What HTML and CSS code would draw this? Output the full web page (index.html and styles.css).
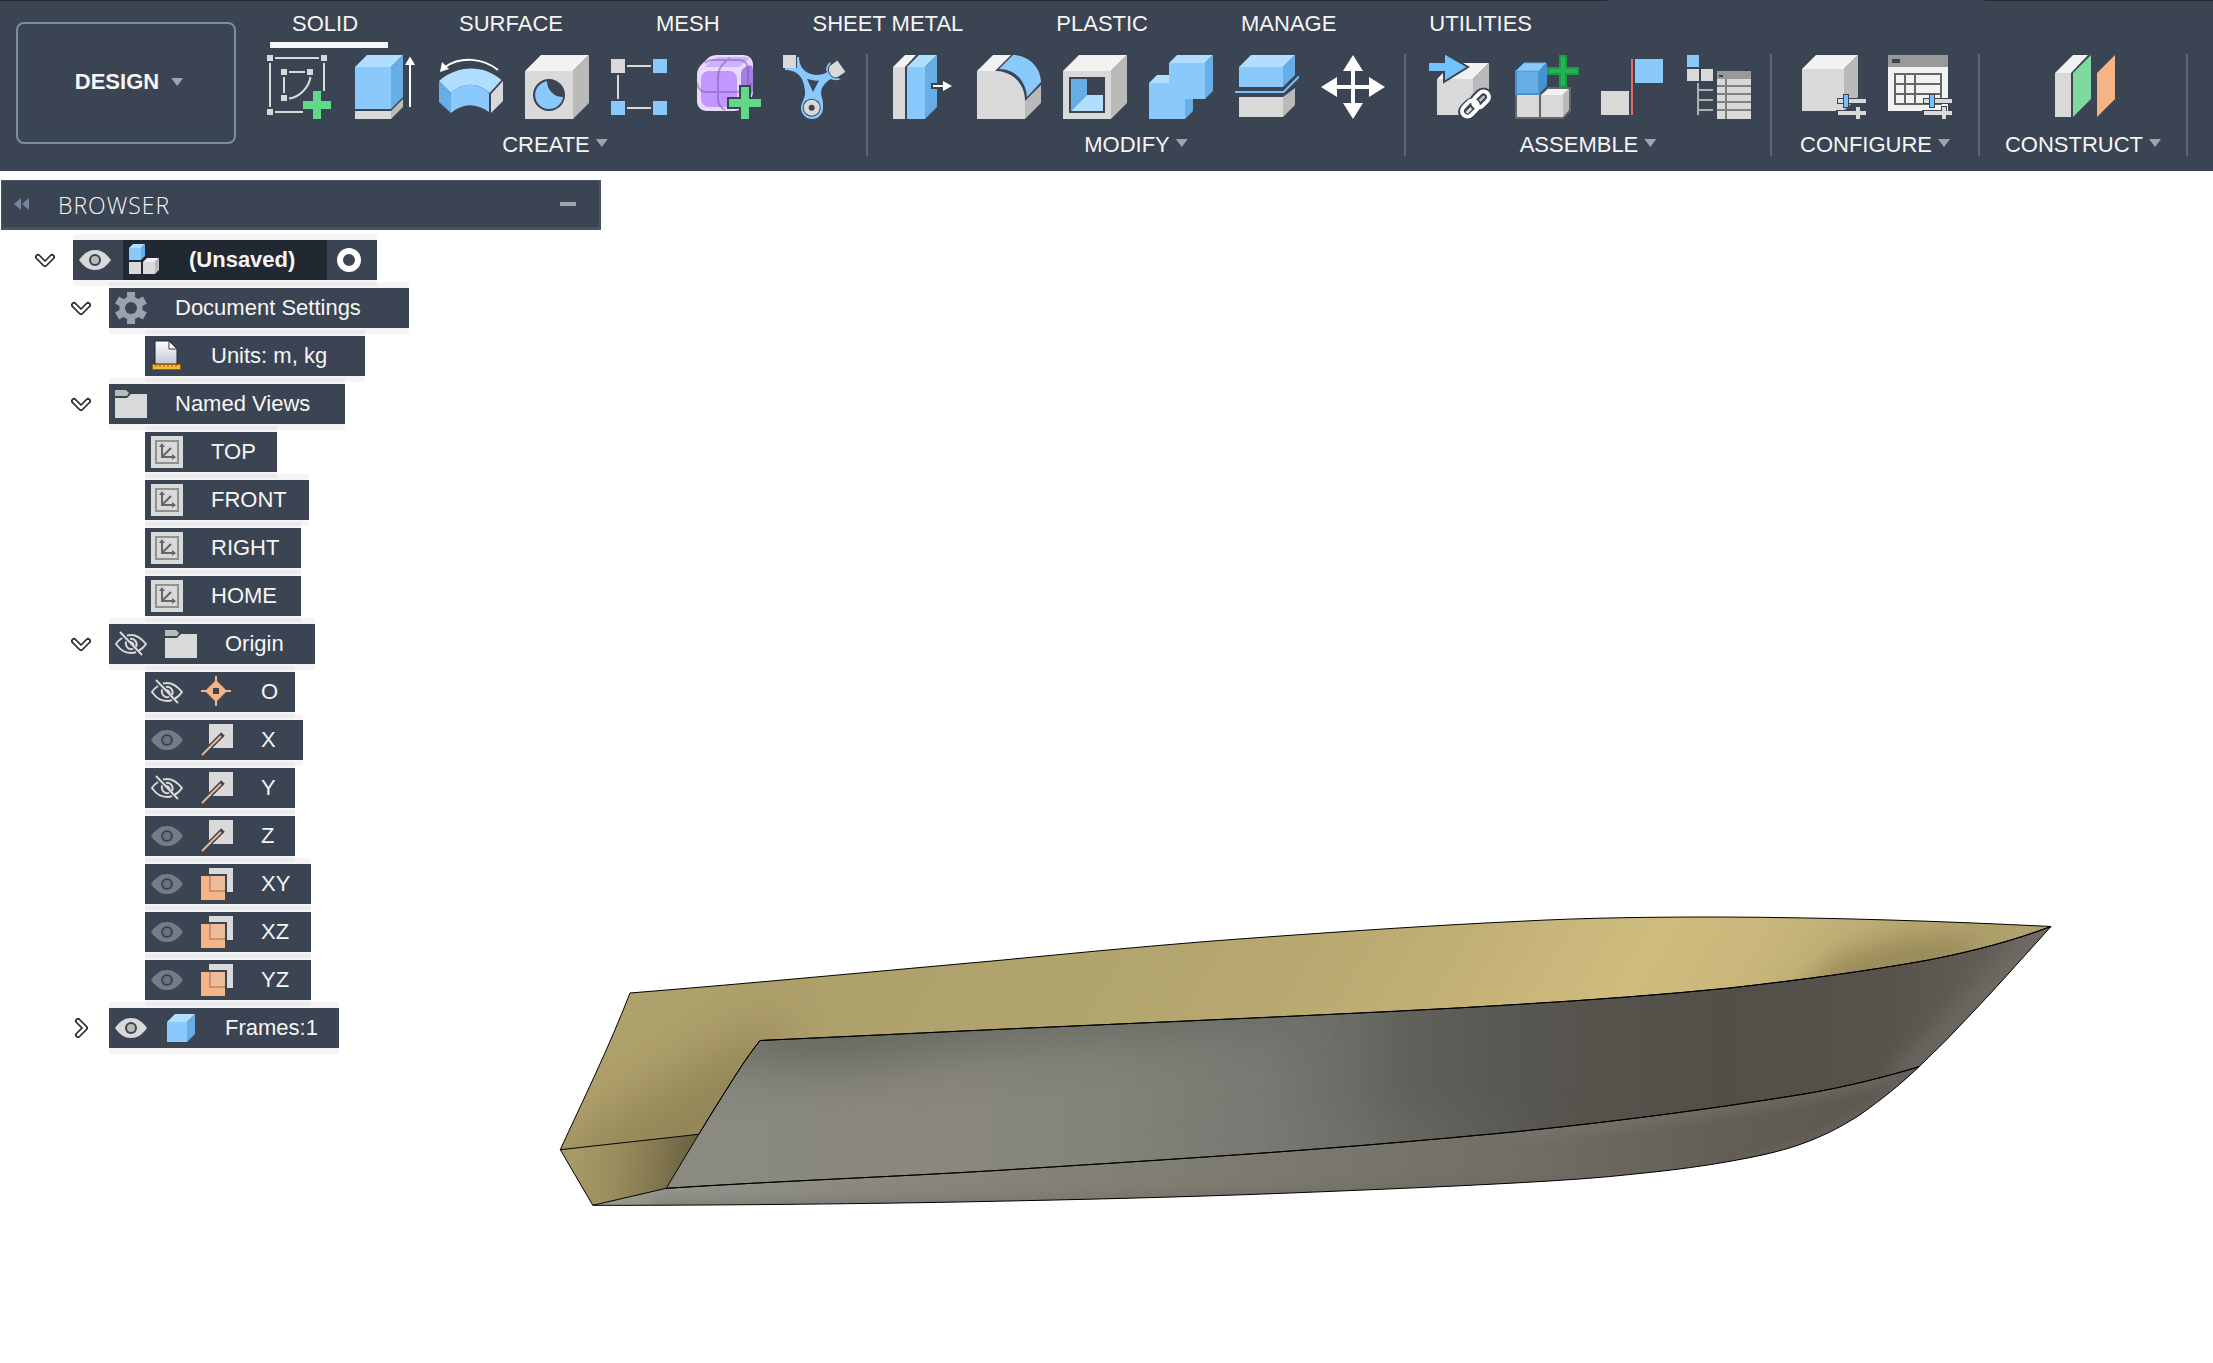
FILE: index.html
```html
<!DOCTYPE html>
<html lang="en">
<head>
<meta charset="utf-8">
<title>Design workspace</title>
<link rel="stylesheet" href="styles.css">
</head>
<body>
<svg class="sprite" aria-hidden="true">
  <symbol id="eye" viewBox="0 0 32 32"><path fill="#d9d9d9" d="M0 16C5 9 10 6 16 6s11 3 16 10c-5 7-10 10-16 10S5 23 0 16z"/><circle cx="16" cy="16" r="6" fill="#3b4453"/><circle cx="16" cy="16" r="4" fill="#bababa"/></symbol>
  <symbol id="eye-dim" viewBox="0 0 32 32"><path fill="#767c87" d="M0 16C5 9 10 6 16 6s11 3 16 10c-5 7-10 10-16 10S5 23 0 16z"/><circle cx="16" cy="16" r="6" fill="#3b4453"/><circle cx="16" cy="16" r="4" fill="#6b717d"/></symbol>
  <symbol id="eye-off" viewBox="0 0 32 32"><g fill="none" stroke="#d9d9d9" stroke-width="2"><path d="M7 10C4 12 2 14 1 16c5 7 9 9 15 9 2 0 3 0 5-1M12 7.500c7-2 13 1 19 8.500-2 3-4 5-7 6.500"/><path d="M11 13.500c-1 6 4 9 7 7M15 11c5-1 8 4 6 8M15 14c2 0 4 2 3.500 4"/><path d="M5 4l22 23"/></g></symbol>
  <symbol id="assembly" viewBox="0 0 32 32"><path fill="#8ac9fc" d="M0 4h12v12H0z"/><path fill="#b0deff" d="M0 4l4-4h12l-4 4z"/><path fill="#67aee6" d="M12 4l4-4v12l-4 4z"/><path fill="#d9d9d9" d="M0 18h12v12H0zM14 18h12v12H14z"/><path fill="#f2f2f2" d="M14 18l4-4h12l-4 4z"/><path fill="#bababa" d="M26 18l4-4v12l-4 4z"/></symbol>
  <symbol id="gear" viewBox="0 0 32 32"><g fill="#9da1ae"><circle cx="16" cy="16" r="11.500"/><path d="M12 0h8v32h-8z"/><path d="M12 0h8v32h-8z" transform="rotate(60 16 16)"/><path d="M12 0h8v32h-8z" transform="rotate(120 16 16)"/></g><circle cx="16" cy="16" r="6" fill="#3b4453"/></symbol>
  <symbol id="units" viewBox="0 0 32 32"><defs><linearGradient id="sheet" x1="0" y1="0" x2="0" y2="1"><stop offset="0" stop-color="#fff"/><stop offset="1" stop-color="#c3c7d6"/></linearGradient></defs><path d="M4 24V1h15l7 8v15z" fill="url(#sheet)" stroke="#222831"/><path d="M18 1v8h8z" fill="#fff" stroke="#333a45"/><path d="M1.500 24.500h28v5h-28z" fill="#f0c136" stroke="#9a5e12"/><path d="M5 25v2m4-2v2m4-2v2m4-2v2m4-2v2m4-2v2" stroke="#9a5e12"/></symbol>
  <symbol id="folder" viewBox="0 0 32 32"><path fill="#bababa" d="M0 2h11l3 3-2 3H0z"/><path fill="#d9d9d9" d="M0 10h12l4-4h16v24H0z"/></symbol>
  <symbol id="view" viewBox="0 0 32 32"><path fill="#d9d9d9" d="M0 0h32v32H0z"/><path fill="none" stroke="#919191" stroke-width="2" d="M5 5h22v22H5z"/><path fill="none" stroke="#666" stroke-width="2" d="M11 10v11h11M12 20l8-8"/><path fill="#666" d="M8 11l3-4 3 4zM21 18l4 3-4 3z"/></symbol>
  <symbol id="point" viewBox="0 0 32 32"><path fill="#f5b485" d="M14 0h2v5l9 9h5v2h-5l-9 9v5h-2v-5l-9-9H0v-2h5l9-9z"/><path fill="#3b4453" d="M12 12h6v6h-6z"/></symbol>
  <symbol id="axis" viewBox="0 0 32 32"><path fill="#d9d9d9" d="M8 0h24v24H8z"/><path fill="none" stroke="#3b4453" stroke-width="5" d="M3 29L22 10"/><path fill="none" stroke="#f5b485" stroke-width="2" d="M1 31L20 12"/></symbol>
  <symbol id="plane" viewBox="0 0 32 32"><path fill="#d9d9d9" d="M8 0h24v24H8z"/><path fill="#3b4453" d="M0 6h26v26H0z"/><path fill="#f5b485" d="M0 8h24v24H0z"/><path fill="#c8926f" d="M8 8h16v16H8z"/><path fill="#ecbd9b" d="M10 8h14v14H10z"/></symbol>
  <symbol id="body" viewBox="0 0 32 32"><path fill="#8ac9fc" d="M2 10h20v20H2z"/><path fill="#b0deff" d="M2 10l8-8h20l-8 8z"/><path fill="#67aee6" d="M22 10l8-8v20l-8 8z"/></symbol>
  <symbol id="open" viewBox="0 0 20 20"><g fill="none" stroke-linecap="round" stroke-linejoin="round"><path stroke="#2b2b2b" stroke-width="6" d="M3 7l7 7 7-7"/><path stroke="#fff" stroke-width="2.500" d="M3 7l7 7 7-7"/></g></symbol>
  <symbol id="closed" viewBox="0 0 20 20"><g fill="none" stroke-linecap="round" stroke-linejoin="round"><path stroke="#2b2b2b" stroke-width="6" d="M7 3l7 7-7 7"/><path stroke="#fff" stroke-width="2.500" d="M7 3l7 7-7 7"/></g></symbol>
  <symbol id="sliders" viewBox="0 0 64 64"><path fill="#3b4453" d="M35 43h6v-4h6v4h17v6H47v4h-6v-4h-6zM34 55h19v-4h6v13H34z"/><path fill="#d9d9d9" d="M36 44h28v4H36zM36 56h18v-4h4v4h6v4h-6v4h-4v-4H36z"/><path fill="#3b4453" d="M41 40h6v12h-6z"/><path fill="#72c2ff" d="M42 40h4v12h-4z"/></symbol>
</svg>

<header class="toolbar">
  <button class="workspace-switch" type="button">DESIGN <span class="caret"></span></button>
  <div class="ribbon">
    <nav class="tabs" aria-label="Tool tabs">
      <button class="tab is-active" type="button">SOLID</button>
      <button class="tab" type="button">SURFACE</button>
      <button class="tab" type="button">MESH</button>
      <button class="tab" type="button">SHEET METAL</button>
      <button class="tab" type="button">PLASTIC</button>
      <button class="tab" type="button">MANAGE</button>
      <button class="tab" type="button">UTILITIES</button>
    </nav>
    <div class="groups">
      <section class="group">
        <div class="tools">
          <button class="tool" type="button" aria-label="Create sketch"><svg viewBox="0 0 64 64"><path fill="#d9d9d9" d="M0 0h6v6H0zM54 0h6v6h-6zM0 54h6v6H0zM14 14h6v6h-6zM40 14h6v6h-6zM14 40h6v6h-6zM8 2h44v2H8zM2 8h2v44H2zM8 56h28v2H8zM56 8h2v28h-2zM22 16h16v2H22zM16 22h2v16h-2z"/><path fill="none" stroke="#d9d9d9" stroke-width="2" d="M43.500 22C42 32 33 42 22 43.500"/><path fill="#62d988" d="M46 36h8v10h10v8H54v10h-8V54H36v-8h10z"/></svg></button>
          <button class="tool" type="button" aria-label="Extrude"><svg viewBox="0 0 64 64"><path fill="#8ac9fc" d="M2 12h36v42H2z"/><path fill="#b0deff" d="M2 12L14 0h36L38 12z"/><path fill="#67aee6" d="M38 12L50 0v42L38 54z"/><path fill="#d9d9d9" d="M2 56h36v8H2z"/><path fill="#bababa" d="M38 56l12-12v8L38 64z"/><path fill="#fff" d="M56 10h-4l5-8.500 5 8.500h-4v42h-2z"/></svg></button>
          <button class="tool" type="button" aria-label="Revolve"><svg viewBox="0 0 64 64"><path fill="#b0deff" d="M0 26C18 10 44 9 62.500 25L50.500 38C38 27 24 27 12 38z"/><path fill="#67aee6" d="M0 26l12 12v20L0 47z"/><path fill="#8ac9fc" d="M12 38c12-11 26-11 38 0v19c-13-9-26-9-38 1z"/><path fill="#d9d9d9" d="M52 39l12-13v20L52 58z"/><path fill="none" stroke="#fff" stroke-width="2" d="M59 15C44 3 22 1 6 12"/><path fill="#fff" d="M1 17L3 7l7 7z"/></svg></button>
          <button class="tool" type="button" aria-label="Hole"><svg viewBox="0 0 64 64"><path fill="#d9d9d9" d="M0 16h48v48H0z"/><path fill="#f2f2f2" d="M0 16L16 0h48L48 16z"/><path fill="#bababa" d="M48 16L64 0v48L48 64z"/><circle cx="24" cy="40" r="16" fill="#3b4453"/><path fill="#8ac9fc" d="M22 26.200A16 16 0 0 0 38 42 14 14 0 1 1 22 26.200z"/></svg></button>
          <button class="tool" type="button" aria-label="Pattern"><svg viewBox="0 0 64 64"><path fill="#d9d9d9" d="M0 4h14v14H0zM16 10h24v2H16zM6 20h2v24H6zM16 52h24v2H16z"/><path fill="#8ac9fc" d="M42 4h14v14H42zM0 46h14v14H0zM42 46h14v14H42z"/></svg></button>
          <button class="tool" type="button" aria-label="Create form"><svg viewBox="0 0 64 64"><path fill="#e8daff" d="M0 20c0-5 2-8 4-10l6-6c3-3 6-4 10-4h26c6 0 10 4 10 10v26c0 4-1 7-4 10l-6 6c-3 3-5 4-10 4H10C4 56 0 52 0 46z"/><rect x="4" y="16" width="36" height="36" rx="8" fill="#c297ff"/><path fill="#cfb2fb" d="M8 12l6-6c3-3 5-4 9-4h25c3 0 4 1 4 2L42 12z"/><path fill="#a67de5" d="M44 20c0-4 1-6 3-7 5-4 9-4 9 2v20c0 4-8 12-12 9z"/><path fill="none" stroke="#7c55ad" stroke-opacity=".5" stroke-width="2" d="M0 28c1 6 4 9 10 9h30c8-2 11-3 15-9M8 8c2-2 4-3 8-3h26c6 0 9 4 9 11v26M28 55c-4-2-7-5-7-11V20c1-7 4-11 12-17"/><path fill="#3b4453" d="M42 30h12v12h10v12H54v10H42V54H30V42h12z"/><path fill="#62d988" d="M44 32h8v12h12v8H52v12h-8V52H32v-8h12z"/></svg></button>
          <button class="tool" type="button" aria-label="Automated modeling"><svg viewBox="0 0 64 64"><path fill="#8ac9fc" d="M14 2h2c0 9 5 17 17 18 5 0 9-1 11-3-2-4 0-8 4-10-2 5-2 9 2 13 3 3 5 3 8 4-4 2-8 1-10 0-7 4-12 10-9 19 1 3 1 5 1 10a11 11 0 0 1-22 0c0-5 5-11 4-17C21 24 16 15 2 15v-2h12z"/><path fill="#3b4453" d="M24 24c4 1 8 2 12 1.500L30 37z"/><path fill="#d9d9d9" d="M0 0h13v13H0z"/><path fill="#d9d9d9" stroke="#3b4453" d="M54.500 5L63 17l-9 6c-7 0-10-7-8-12z"/><circle cx="28.700" cy="52.700" r="9" fill="#3b4453"/><circle cx="28.700" cy="52.700" r="8" fill="#d9d9d9"/><circle cx="28.700" cy="52.700" r="3" fill="#3b4453"/></svg></button>
        </div>
        <button class="group-label" type="button">CREATE <span class="caret"></span></button>
      </section>
      <section class="group">
        <div class="tools">
          <button class="tool" type="button" aria-label="Press pull"><svg viewBox="0 0 64 64"><path fill="#d9d9d9" d="M2 12h12v52H2z"/><path fill="#f2f2f2" d="M2 12L14 0h11L14 12z"/><path fill="#8ac9fc" d="M16 12h18v52H16z"/><path fill="#b0deff" d="M16 12L28 0h18L34 12z"/><path fill="#67aee6" d="M34 12L46 0v52L34 64z"/><path fill="#3b4453" d="M40 28h8v6h-8z"/><path fill="#fff" d="M42 30h10v-4l9 5-9 5v-4H42z"/></svg></button>
          <button class="tool" type="button" aria-label="Fillet"><svg viewBox="0 0 64 64"><path fill="#d9d9d9" d="M0 16h20c16 1 28 13 28 30v18H0z"/><path fill="#f2f2f2" d="M0 16L16 0h18L18 16z"/><path fill="#8ac9fc" d="M22 14L36 0c16 0 28 13 28 27L50 42C49 26 38 14 22 14z"/><path fill="#bababa" d="M48 46l16-16v18L48 64z"/></svg></button>
          <button class="tool" type="button" aria-label="Shell"><svg viewBox="0 0 64 64"><path fill="#d9d9d9" d="M0 16h48v48H0z"/><path fill="#f2f2f2" d="M0 16L16 0h48L48 16z"/><path fill="#bababa" d="M48 16L64 0v48L48 64z"/><path fill="#3b4453" d="M6 22h36v36H6z"/><path fill="#67aee6" d="M8 24h16v16L8 56z"/><path fill="#b0deff" d="M8 56l16-16h16v16z"/></svg></button>
          <button class="tool" type="button" aria-label="Combine"><svg viewBox="0 0 64 64"><path fill="#8ac9fc" d="M0 28h20V8h36v36H36v20H0z"/><path fill="#b0deff" d="M0 28l8-8h12v8zM20 8l8-8h36l-8 8z"/><path fill="#67aee6" d="M56 8l8-8v36l-8 8zM36 44h8v12l-8 8z"/></svg></button>
          <button class="tool" type="button" aria-label="Split body"><svg viewBox="0 0 64 64"><path fill="#8ac9fc" d="M4 12h44v20H4z"/><path fill="#b0deff" d="M4 12L16 0h44L48 12z"/><path fill="#67aee6" d="M48 12L60 0v20L48 32z"/><path fill="none" stroke="#72c2ff" stroke-width="2" d="M0 37h48.500L64 21.500"/><path fill="#d9d9d9" d="M4 42h44v20H4z"/><path fill="#bababa" d="M48 42l12-9v17L48 62z"/></svg></button>
          <button class="tool" type="button" aria-label="Move"><svg viewBox="0 0 64 64"><path fill="#fff" d="M32 0l10 16h-8v14h14v-8l16 10-16 10v-8H34v14h8L32 64 22 48h8V34H16v8L0 32l16-10v8h14V16h-8z"/></svg></button>
        </div>
        <button class="group-label" type="button">MODIFY <span class="caret"></span></button>
      </section>
      <section class="group">
        <div class="tools">
          <button class="tool" type="button" aria-label="Insert component"><svg viewBox="0 0 64 64"><path fill="#d9d9d9" d="M8 24h36v36H8z"/><path fill="#f2f2f2" d="M8 24L24 8h36L44 24z"/><path fill="#bababa" d="M44 24L60 8v36L44 60z"/><path fill="#72c2ff" stroke="#3b4453" stroke-width="2" d="M-1 7h16v-9l24 14-24 15V17H-1z"/><g fill="none"><g stroke="#3b4453" stroke-width="8"><rect x="43" y="39" width="18" height="11" rx="5.500" transform="rotate(-45 52 44.500)"/><rect x="32" y="49" width="18" height="11" rx="5.500" transform="rotate(-45 41 54.500)"/></g><g stroke="#fff" stroke-width="4"><rect x="43" y="39" width="18" height="11" rx="5.500" transform="rotate(-45 52 44.500)"/><rect x="32" y="48" width="18" height="11" rx="5.500" transform="rotate(-45 41 53.500)"/></g></g></svg></button>
          <button class="tool" type="button" aria-label="New component"><svg viewBox="0 0 64 64"><path fill="#666" d="M0 40h25l8-8h23v24l-8 8H0z"/><path fill="#d9d9d9" d="M2 40h22v22H2zM26 40h22v22H26z"/><path fill="#f2f2f2" d="M26 40l7-6h21l-6 6z"/><path fill="#bababa" d="M48 40l6-6v21l-6 7z"/><path fill="#67aee6" stroke="#4592d0" stroke-width="2" d="M1 16h23v23H1z"/><path fill="#8ac9fc" stroke="#67aee6" d="M1 16l8-8h22l-7 8z"/><path fill="#4592d0" d="M24 16l8-8v23l-8 8z"/><path fill="#22b552" stroke="#1d9a46" stroke-width="2" d="M45 1h6v12h12v6H51v12h-6V19H33v-6h12z"/></svg></button>
          <button class="tool" type="button" aria-label="Joint"><svg viewBox="0 0 64 64"><path fill="#d9d9d9" d="M0 36h28v24H0z"/><path fill="#e56a6f" d="M30 4h2v56h-2z"/><path fill="#8ac9fc" d="M34 4h28v24H34z"/></svg></button>
          <button class="tool" type="button" aria-label="Bill of materials"><svg viewBox="0 0 64 64"><path fill="#8ac9fc" d="M0 0h12v12H0z"/><path fill="#d9d9d9" d="M0 14h12v12H0zM14 14h12v12H14zM30 24h34v40H30z"/><path fill="#b0b0b0" d="M10 28h2v6h14v2H12v8h14v2H12v8h14v2H12v4h-2z"/><path fill="#999" d="M30 16h34v8H30z"/><path fill="#3b4453" d="M32 20h4v2h-4z"/><path fill="#808080" d="M38 24h2v40h-2zM30 30h34v2H30zM30 38h34v2H30zM30 46h34v2H30zM30 54h34v2H30z"/></svg></button>
        </div>
        <button class="group-label" type="button">ASSEMBLE <span class="caret"></span></button>
      </section>
      <section class="group">
        <div class="tools">
          <button class="tool" type="button" aria-label="Configure model"><svg viewBox="0 0 64 64"><path fill="#d9d9d9" d="M0 14h42v42H0z"/><path fill="#f2f2f2" d="M0 14L14 0h42L42 14z"/><path fill="#bababa" d="M42 14L56 0v42L42 56z"/><use href="#sliders"/></svg></button>
          <button class="tool" type="button" aria-label="Configuration table"><svg viewBox="0 0 64 64"><path fill="#f2f2f2" d="M0 12h60v44H0z"/><path fill="#999" d="M0 0h60v12H0z"/><path fill="#3b4453" d="M4 4h8v4H4z"/><path fill="none" stroke="#666" stroke-width="2" d="M7 19h46v30H7zM17 19v30M27 19v30M7 29h46M7 39h46"/><use href="#sliders"/></svg></button>
        </div>
        <button class="group-label" type="button">CONFIGURE <span class="caret"></span></button>
      </section>
      <section class="group">
        <div class="tools">
          <button class="tool" type="button" aria-label="Offset plane"><svg viewBox="0 0 64 64"><path fill="#d9d9d9" d="M2 18h16v44H2z"/><path fill="#f2f2f2" d="M2 18L20 0h15L18 18z"/><path fill="#7dd99f" d="M20 18L38 0v44L20 62z"/><path fill="#f5b485" d="M44 18L62 0v44L44 62z"/></svg></button>
        </div>
        <button class="group-label" type="button">CONSTRUCT <span class="caret"></span></button>
      </section>
    </div>
  </div>
</header>

<main class="workspace">
  <svg class="model" viewBox="0 171 2213 1192" role="img" aria-label="Boat hull">
    <defs>
      <linearGradient id="gold" gradientUnits="userSpaceOnUse" x1="600" y1="980" x2="1666" y2="1620">
        <stop offset="0" stop-color="#b0a26c"/><stop offset=".12" stop-color="#aea06b"/><stop offset=".34" stop-color="#b1a46d"/><stop offset=".48" stop-color="#b8a970"/><stop offset=".6" stop-color="#c3b177"/><stop offset=".71" stop-color="#cfbd7f"/><stop offset=".78" stop-color="#c9b77b"/><stop offset=".86" stop-color="#bcab73"/><stop offset=".94" stop-color="#aea06b"/><stop offset="1" stop-color="#b4a66f"/>
      </linearGradient>
      <linearGradient id="floor" gradientUnits="userSpaceOnUse" x1="575" y1="1160" x2="690" y2="1176">
        <stop offset="0" stop-color="#a89a66"/><stop offset=".35" stop-color="#9a8d5e"/><stop offset=".7" stop-color="#83784f"/><stop offset="1" stop-color="#6b6142"/>
      </linearGradient>
      <linearGradient id="side" gradientUnits="userSpaceOnUse" x1="670" y1="0" x2="2051" y2="0">
        <stop offset="0" stop-color="#8a8a80"/><stop offset=".2" stop-color="#8a887e"/><stop offset=".32" stop-color="#82837a"/><stop offset=".43" stop-color="#777a72"/><stop offset=".49" stop-color="#6b6d66"/><stop offset=".54" stop-color="#605f59"/><stop offset=".62" stop-color="#585650"/><stop offset=".76" stop-color="#524f47"/><stop offset=".88" stop-color="#57534c"/><stop offset="1" stop-color="#68645d"/>
      </linearGradient>
      <linearGradient id="bottom" gradientUnits="userSpaceOnUse" x1="600" y1="0" x2="1919" y2="0">
        <stop offset="0" stop-color="#989a92"/><stop offset=".2" stop-color="#8a8880"/><stop offset=".45" stop-color="#7f7c73"/><stop offset=".7" stop-color="#716e66"/><stop offset=".85" stop-color="#635e56"/><stop offset="1" stop-color="#5b564f"/>
      </linearGradient>
      <path id="inner" d="M630 993C755 983 880 971 1000 960.300 1090 951.500 1180 943 1266.700 937 1350 931 1440 925 1520 921.300 1590 917.500 1655 917 1722 917 1830 917.500 1940 921 2051 926.500 2015 940 1975 951 1928.600 960 1865 971.500 1800 980 1729.600 988 1660 995 1590 1000 1520 1004.300 1480 1006.800 1440 1009 1400 1011 1270 1017.500 1140 1023 1000 1029.300 920 1033 880 1035 760 1040.500 750 1053 740 1068 729.400 1085 718 1103 708 1119 698.800 1134.300L560.300 1149.700C582 1102 608 1050 630 993z"/>
      <path id="topside" d="M760 1040.500C880 1035 920 1033 1000 1029.300 1140 1023 1270 1017.500 1400 1011 1440 1009 1480 1006.800 1520 1004.300 1590 1000 1660 995 1729.600 988 1800 980 1865 971.500 1928.600 960 1975 951 2015 940 2051 926.500L2009 973C1993 991 1976 1009 1959 1026.700 1945 1042 1932 1054 1919 1066.700 1885 1077 1850 1086 1806 1093.700 1715 1108.500 1620 1121 1520 1131.300 1440 1139 1360 1146 1273 1152.300 1180 1159 1090 1164.500 1000 1170.300 890 1177 780 1181 666.300 1188.300 677 1170 688 1152 698.800 1134.300 708 1119 718 1103 729.400 1085 740 1068 750 1053 760 1040.500z"/>
      <path id="keel" d="M592.800 1205.300L666.300 1188.300C780 1181 890 1177 1000 1170.300 1090 1164.500 1180 1159 1273 1152.300 1360 1146 1440 1139 1520 1131.300 1620 1121 1715 1108.500 1806 1093.700 1850 1086 1885 1077 1919 1066.700 1900 1085 1882 1099 1859.700 1115 1845 1124.500 1828 1134 1806 1142.300 1787 1149.500 1765 1155 1737 1160 1708 1165.500 1675 1170 1637.800 1173.700 1600 1178 1560 1180.500 1520 1182.700 1460 1186 1400 1188.500 1333 1191.300 1210 1196.500 1090 1199.500 958.700 1202 850 1204 700 1205.500 592.800 1205.300z"/>
      <clipPath id="inner-clip"><use href="#inner"/></clipPath>
      <clipPath id="topside-clip"><use href="#topside"/></clipPath>
      <clipPath id="keel-clip"><use href="#keel"/></clipPath>
      <filter id="soft" x="-50%" y="-80%" width="200%" height="260%"><feGaussianBlur stdDeviation="26"/></filter>
      <filter id="fine" x="-30%" y="-80%" width="160%" height="260%"><feGaussianBlur stdDeviation="12"/></filter>
      <filter id="edge" x="-20%" y="-50%" width="140%" height="200%"><feGaussianBlur stdDeviation="7"/></filter>
    </defs>
    <use href="#inner" fill="url(#gold)"/>
    <g clip-path="url(#inner-clip)">
      <path d="M520 1190L760 1180 790 1020 720 1050 620 1110z" fill="#897c50" opacity=".7" filter="url(#soft)"/>
      <path d="M1790 1000L1840 955 1900 938 1980 938 1960 968 1880 990z" fill="#8f8253" opacity=".75" filter="url(#fine)"/>
    </g>
    <path d="M560.300 1149.700L698.800 1134.300 666.300 1188.300 592.800 1205.300z" fill="url(#floor)"/>
    <use href="#topside" fill="url(#side)"/>
    <g clip-path="url(#topside-clip)">
      <path d="M700 1060L770 990 1000 990 1300 980 1300 1015 1000 1042 850 1066z" fill="#5c5e57" opacity=".8" filter="url(#soft)"/>
      <path d="M1170 1175L1240 1130 1420 1125 1560 1128 1400 1155z" fill="#7a7c74" opacity=".5" filter="url(#soft)"/>
      <path d="M1895 1085L1965 1015 2060 915" fill="none" stroke="#7b766e" stroke-width="22" opacity=".65" filter="url(#fine)"/>
    </g>
    <use href="#keel" fill="url(#bottom)"/>
    <g clip-path="url(#keel-clip)" fill="none">
      <path d="M650 1206C1000 1210 1400 1195 1560 1186" stroke="#67645b" stroke-width="12" opacity=".5" filter="url(#edge)"/>
      <path d="M1520 1133C1640 1122 1780 1100 1900 1072" stroke="#7b776f" stroke-width="12" opacity=".7" filter="url(#edge)"/>
      <path d="M1740 1168C1820 1150 1870 1120 1925 1066" stroke="#7b766e" stroke-width="10" opacity=".6" filter="url(#edge)"/>
    </g>
    <g class="edges">
      <use href="#inner"/>
      <use href="#topside"/>
      <use href="#keel"/>
      <path d="M560.300 1149.700L592.800 1205.300"/>
    </g>
  </svg>

  <aside class="browser" aria-label="Browser">
    <div class="browser-head">
      <button class="collapse" type="button" aria-label="Collapse panel"><svg viewBox="0 0 16 12"><path fill="#78869e" d="M7 0v12L0 6zM15 0v12L8 6z"/></svg></button>
      <h2>BROWSER</h2>
      <button class="minimize" type="button" aria-label="Minimize"></button>
    </div>
    <ul class="tree">
      <li>
        <div class="node"><button class="twist" type="button" aria-label="Collapse"><svg><use href="#open"/></svg></button>
          <div class="bar root"><svg><use href="#eye"/></svg><div class="current"><svg><use href="#assembly"/></svg><span>(Unsaved)</span></div><input type="radio" name="active" aria-label="Activate component"></div></div>
        <ul>
          <li>
            <div class="node"><button class="twist" type="button" aria-label="Collapse"><svg><use href="#open"/></svg></button><div class="bar settings"><svg><use href="#gear"/></svg><span>Document Settings</span></div></div>
            <ul><li><div class="bar units"><svg><use href="#units"/></svg><span>Units: m, kg</span></div></li></ul>
          </li>
          <li>
            <div class="node"><button class="twist" type="button" aria-label="Collapse"><svg><use href="#open"/></svg></button><div class="bar views"><svg><use href="#folder"/></svg><span>Named Views</span></div></div>
            <ul>
              <li><div class="bar view-s"><svg><use href="#view"/></svg><span>TOP</span></div></li>
              <li><div class="bar view-l"><svg><use href="#view"/></svg><span>FRONT</span></div></li>
              <li><div class="bar view-m"><svg><use href="#view"/></svg><span>RIGHT</span></div></li>
              <li><div class="bar view-m"><svg><use href="#view"/></svg><span>HOME</span></div></li>
            </ul>
          </li>
          <li>
            <div class="node"><button class="twist" type="button" aria-label="Collapse"><svg><use href="#open"/></svg></button><div class="bar origin"><svg><use href="#eye-off"/></svg><svg><use href="#folder"/></svg><span>Origin</span></div></div>
            <ul>
              <li><div class="bar axis-s"><svg><use href="#eye-off"/></svg><svg><use href="#point"/></svg><span>O</span></div></li>
              <li><div class="bar axis-m"><svg><use href="#eye-dim"/></svg><svg><use href="#axis"/></svg><span>X</span></div></li>
              <li><div class="bar axis-s"><svg><use href="#eye-off"/></svg><svg><use href="#axis"/></svg><span>Y</span></div></li>
              <li><div class="bar axis-s"><svg><use href="#eye-dim"/></svg><svg><use href="#axis"/></svg><span>Z</span></div></li>
              <li><div class="bar plane"><svg><use href="#eye-dim"/></svg><svg><use href="#plane"/></svg><span>XY</span></div></li>
              <li><div class="bar plane"><svg><use href="#eye-dim"/></svg><svg><use href="#plane"/></svg><span>XZ</span></div></li>
              <li><div class="bar plane"><svg><use href="#eye-dim"/></svg><svg><use href="#plane"/></svg><span>YZ</span></div></li>
            </ul>
          </li>
          <li>
            <div class="node"><button class="twist" type="button" aria-label="Expand"><svg><use href="#closed"/></svg></button><div class="bar frames"><svg><use href="#eye"/></svg><svg><use href="#body"/></svg><span>Frames:1</span></div></div>
          </li>
        </ul>
      </li>
    </ul>
  </aside>
</main>
</body>
</html>
```
FILE: styles.css
```css
* { box-sizing: border-box; }

body {
  display: flex;
  flex-direction: column;
  min-height: 100vh;
  margin: 0;
  overflow-x: hidden;
  background: #fff;
  color: #f5f5f5;
  font: 22px/24px "Liberation Sans", Arial, sans-serif;
}

button {
  padding: 0;
  border: 0;
  background: none;
  color: inherit;
  font: inherit;
  white-space: nowrap;
  cursor: pointer;
}

svg { display: block; }

ul { margin: 0; padding: 0; list-style: none; }

.sprite { position: absolute; width: 0; height: 0; }

.caret {
  width: 12px;
  height: 8px;
  background: #a0a4b0;
  clip-path: polygon(0 0, 100% 0, 50% 100%);
}

/* Toolbar */
.toolbar {
  display: flex;
  height: 171px;
  background:
    linear-gradient(90deg, #242a33 72.6%, transparent 72.6%, transparent 89.7%, #242a33 89.7%) top / 100% 1px no-repeat,
    #3b4453;
}

.workspace-switch {
  display: flex;
  flex: none;
  align-items: center;
  justify-content: center;
  gap: 12px;
  width: 220px;
  height: 122px;
  margin: 22px 8px 0 16px;
  padding: 0 0 2px 6px;
  border: 2px solid #7b8da3;
  border-radius: 8px;
  font-weight: bold;
}

.ribbon { flex: 1; min-width: 0; }

.tabs {
  display: flex;
  gap: 41px;
  height: 48px;
  padding-left: 26px;
}

.tab {
  height: 48px;
  padding: 12px 30px 6px 22px;
  border-bottom: 6px solid transparent;
}

.tab.is-active { margin-right: 8px; border-color: #f5f5f5; }

.groups { display: flex; margin-top: 6px; }

.group {
  display: flex;
  flex: none;
  flex-direction: column;
  align-items: center;
  justify-content: space-between;
  min-width: 208px;
  height: 102px;
  padding: 1px 19px 0 23px;
  border-right: 2px solid #5a6678;
}

.tools { display: flex; gap: 22px; }

.tool, .tool svg { display: block; width: 64px; height: 64px; }

.group-label {
  display: flex;
  align-items: center;
  gap: 6px;
  margin-right: 4px;
  line-height: 22px;
}

.group-label .caret { margin-bottom: 4px; }

/* Canvas and model */
.workspace { display: grid; flex: 1; }

.model, .browser { grid-area: 1 / 1; }

.model { width: 100%; }

.edges { fill: none; stroke: #000; stroke-width: 1; }

/* Browser panel */
.browser { z-index: 1; width: 601px; padding-top: 9px; }

.browser-head {
  display: flex;
  align-items: center;
  height: 50px;
  margin-left: 1px;
  padding: 0 23px 0 12px;
  border: 1px solid #465362;
  border-width: 1px 2px 3px 1px;
  background: #3b4453;
}

.browser-head h2 {
  flex: 1;
  margin: 0 0 0 28px;
  padding-top: 2px;
  font: 300 23px/24px "Open Sans", "Noto Sans", sans-serif;
  letter-spacing: 1px;
}

.collapse svg { width: 16px; height: 12px; }

.minimize { width: 16px; height: 4px; background: #a0a4b0; }

.tree { padding: 10px 0 0 35px; }

.tree ul { padding-left: 36px; }

.tree ul ul { padding-left: 74px; }

.node { display: flex; align-items: center; gap: 18px; }

.twist, .twist svg { display: block; width: 20px; height: 20px; }

.bar {
  display: flex;
  align-items: center;
  gap: 18px;
  height: 40px;
  margin-bottom: 8px;
  padding-left: 6px;
  background: #3b4453;
  box-shadow: 0 6px rgba(60, 60, 70, .05), 0 -6px rgba(60, 60, 70, .05);
  line-height: 40px;
  white-space: nowrap;
}

.node .twist { margin-bottom: 8px; }

.bar svg { flex: none; width: 32px; height: 32px; }

.bar span { margin-left: 10px; }

.root { gap: 12px; width: 304px; font-weight: bold; }

.current {
  display: flex;
  align-items: center;
  gap: 18px;
  width: 204px;
  padding-left: 6px;
  background: #222831;
}

.bar input {
  width: 24px;
  height: 24px;
  margin: 0 0 0 -2px;
  border: 6px solid #fff;
  border-radius: 50%;
  appearance: none;
}

.settings { width: 300px; }
.units { width: 220px; }
.views { width: 236px; }
.view-s { width: 132px; }
.view-m { width: 156px; }
.view-l { width: 164px; }
.origin { width: 206px; }
.axis-s { width: 150px; }
.axis-m { width: 158px; }
.plane { width: 166px; }
.frames { width: 230px; }
```
